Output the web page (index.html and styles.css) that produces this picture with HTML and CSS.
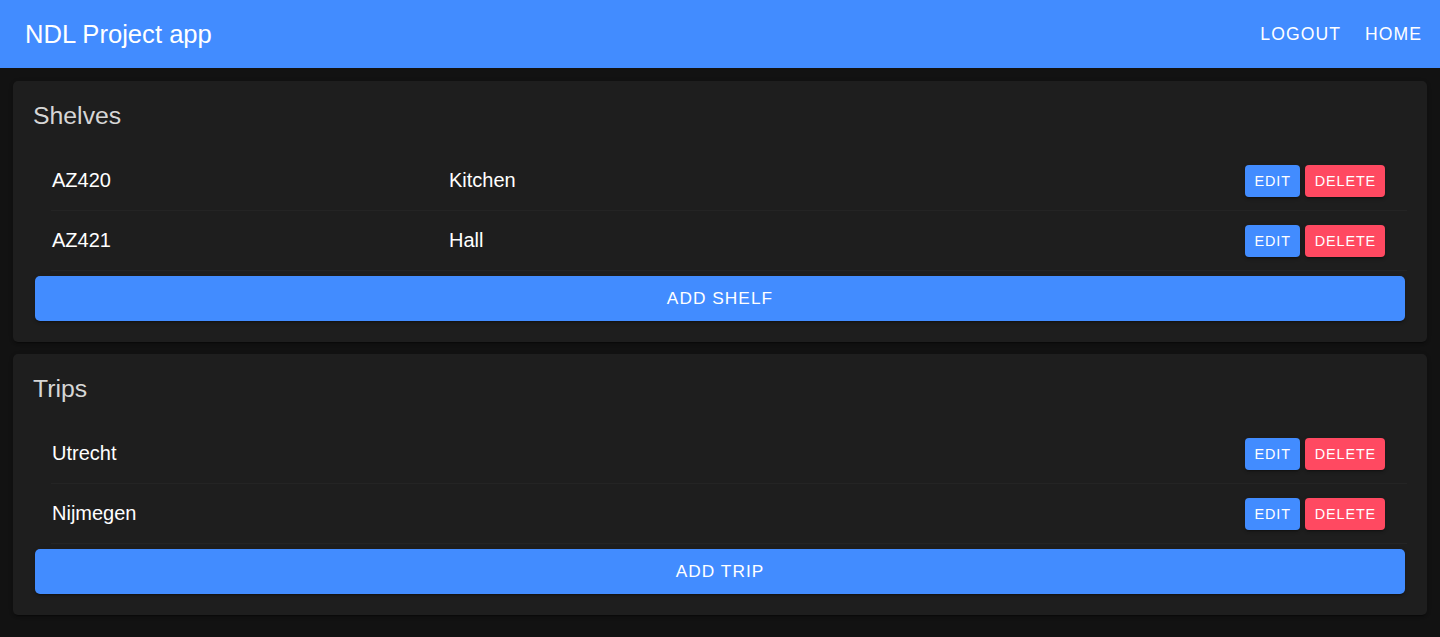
FILE: index.html
```html
<!DOCTYPE html>
<html lang="en">
<head>
<meta charset="utf-8">
<title>NDL Project app</title>
<link rel="stylesheet" href="styles.css">
</head>
<body>
<header class="toolbar">
  <div class="toolbar-title">NDL Project app</div>
  <nav class="toolbar-buttons">
    <button class="nav-btn">Logout</button>
    <button class="nav-btn">Home</button>
  </nav>
</header>
<main class="content">
  <section class="card">
    <h2 class="card-title">Shelves</h2>
    <ul class="list">
      <li class="item">
        <span class="label label-first">AZ420</span>
        <span class="label">Kitchen</span>
        <span class="actions"><button class="btn-sm btn-primary">Edit</button><button class="btn-sm btn-danger">Delete</button></span>
      </li>
      <li class="item">
        <span class="label label-first">AZ421</span>
        <span class="label">Hall</span>
        <span class="actions"><button class="btn-sm btn-primary">Edit</button><button class="btn-sm btn-danger">Delete</button></span>
      </li>
    </ul>
    <button class="btn-block">Add shelf</button>
  </section>
  <section class="card">
    <h2 class="card-title">Trips</h2>
    <ul class="list">
      <li class="item">
        <span class="label">Utrecht</span>
        <span class="actions"><button class="btn-sm btn-primary">Edit</button><button class="btn-sm btn-danger">Delete</button></span>
      </li>
      <li class="item">
        <span class="label">Nijmegen</span>
        <span class="actions"><button class="btn-sm btn-primary">Edit</button><button class="btn-sm btn-danger">Delete</button></span>
      </li>
    </ul>
    <button class="btn-block">Add trip</button>
  </section>
</main>
</body>
</html>
```

FILE: styles.css
```css
* { box-sizing: border-box; }
html, body {
  margin: 0;
  padding: 0;
  background: #121212;
  font-family: "Liberation Sans", Arial, sans-serif;
  color: #fff;
}
button {
  font-family: inherit;
  border: none;
  cursor: pointer;
  text-transform: uppercase;
  color: #fff;
}
.toolbar {
  height: 68px;
  background: #428cff;
  display: flex;
  align-items: center;
  justify-content: space-between;
  padding: 0 19px 0 25px;
}
.toolbar-title {
  font-size: 25.6px;
  color: #fff;
}
.toolbar-buttons {
  display: flex;
  gap: 25px;
}
.nav-btn {
  background: none;
  padding: 0;
  font-size: 17.6px;
  letter-spacing: 0.06em;
  margin-right: -1px;
}
.content {
  display: flex;
  flex-direction: column;
  gap: 12px;
  padding: 13px 13px;
}
.card {
  background: #1e1e1e;
  border-radius: 5px;
  padding: 20px 22px 21px 22px;
  box-shadow: 0 3px 1px -2px rgba(0,0,0,.2), 0 2px 2px 0 rgba(0,0,0,.14), 0 1px 5px 0 rgba(0,0,0,.12);
}
.card-title {
  margin: 0 0 20px -2px;
  font-size: 24.8px;
  line-height: 30px;
  font-weight: normal;
  color: #d6d6d6;
}
.list {
  list-style: none;
  margin: 0 -2px 0 0;
  padding: 0;
}
.item {
  height: 60px;
  margin-left: 16px;
  padding-right: 22px;
  border-bottom: 1px solid #242424;
  display: flex;
  align-items: center;
}
.label {
  font-size: 20px;
  padding-left: 1px;
}
.label-first {
  width: 397px;
}
.actions {
  margin-left: auto;
  display: flex;
  gap: 5px;
}
.btn-sm {
  height: 32px;
  padding: 0 9px 0 10px;
  font-size: 14.4px;
  letter-spacing: 0.06em;
  border-radius: 4px;
  box-shadow: 0 3px 1px -2px rgba(0,0,0,.2), 0 2px 2px 0 rgba(0,0,0,.14), 0 1px 5px 0 rgba(0,0,0,.12);
}
.btn-primary { background: #428cff; }
.btn-danger { background: #ff4961; }
.btn-block {
  display: block;
  width: 100%;
  height: 45px;
  margin-top: 5px;
  background: #428cff;
  border-radius: 5px;
  font-size: 17.3px;
  letter-spacing: 0.06em;
  box-shadow: 0 3px 1px -2px rgba(0,0,0,.2), 0 2px 2px 0 rgba(0,0,0,.14), 0 1px 5px 0 rgba(0,0,0,.12);
}
```
